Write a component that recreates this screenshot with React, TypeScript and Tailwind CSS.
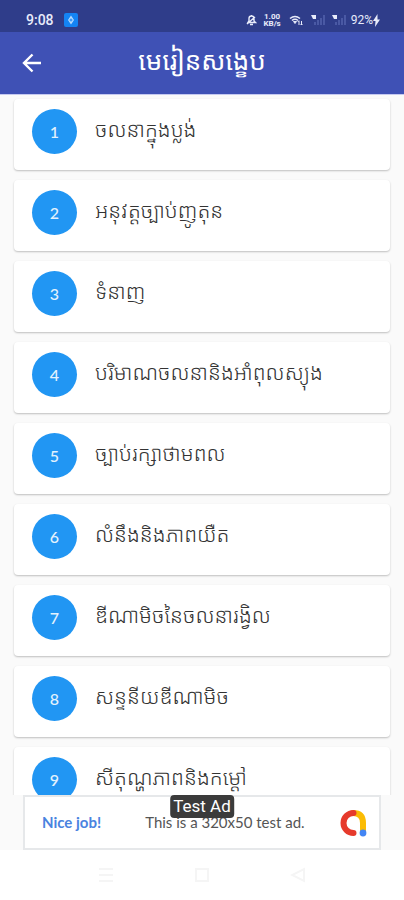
import React from 'react';

interface Lesson {
    id: number;
    title: string;
}

const lessons: Lesson[] = [
    { id: 1, title: 'ចលនាក្នុងប្លង់' },
    { id: 2, title: 'អនុវត្តច្បាប់ញូតុន' },
    { id: 3, title: 'ទំនាញ' },
    { id: 4, title: 'បរិមាណចលនានិងអាំពុលស្យុង' },
    { id: 5, title: 'ច្បាប់រក្សាថាមពល' },
    { id: 6, title: 'លំនឹងនិងភាពយឺត' },
    { id: 7, title: 'ឌីណាមិចនៃចលនារង្វិល' },
    { id: 8, title: 'សន្ទនីយឌីណាមិច' },
    { id: 9, title: 'សីតុណ្ហភាពនិងកម្តៅ' },
];

const SignalIcon: React.FC = () => (
    <svg width="15" height="12" viewBox="0 0 15 12" aria-hidden="true">
        <path d="M0 1h5v4H2z" fill="#e8ebfa" />
        <path d="M4 11V8M7 11V6M10 11V4M13 11V1" stroke="#5463ad" strokeWidth="1.500" />
    </svg>
);

const StatusBar: React.FC = () => (
    <div className="flex h-8 shrink-0 items-center justify-between bg-[#2f3d8a] pt-2 pr-6 pl-[26px] text-[#e8ebfa]">
        <div className="flex items-center gap-2.5">
            <span className="text-sm font-medium">9:08</span>
            <svg width="14" height="14" viewBox="0 0 14 14" aria-hidden="true">
                <rect width="14" height="14" rx="2" fill="#1484f5" />
                <path d="M7 2.500 10 7l-3 4.500L4 7z" fill="#b9dcff" />
                <path d="M7 5.500v3M5.500 7h3" stroke="#1484f5" />
            </svg>
        </div>
        <div className="flex items-center">
            <svg className="mr-1.5" width="11" height="12" viewBox="0 0 11 12" fill="none" stroke="currentColor" strokeWidth="1.400" aria-hidden="true">
                <path d="M2 8.500 3 7V4.500a2.500 2.500 0 0 1 5 0V7l1.500 1.500zM5.500 1v1M4 10.500h3M1 10l8-7" />
            </svg>
            <span className="mr-2 flex flex-col items-center text-[8px] leading-[7px] font-bold">
                <span>1.00</span>
                <span>KB/s</span>
            </span>
            <svg className="mr-2" width="14" height="12" viewBox="0 0 14 12" fill="none" stroke="currentColor" aria-hidden="true">
                <path d="M1 4.500q5-4 10 0M3 6.500q3-2.500 6 0" strokeWidth="1.600" />
                <path d="M4.500 7.500h3L6 9.500z" fill="currentColor" />
                <path d="M10 7v4M8.800 8 10 6.500M12.500 7v4M11.500 10l1 1 1-1" />
            </svg>
            <span className="mr-1 flex gap-1.5">
                <SignalIcon />
                <SignalIcon />
            </span>
            <span className="text-xs">92%</span>
            <svg width="7" height="13" viewBox="0 0 7 13" aria-hidden="true">
                <path d="M4.500 0 0 7h2.500L2 13l5-7.500H4.500z" fill="currentColor" />
            </svg>
        </div>
    </div>
);

const AppBar: React.FC = () => (
    <header className="grid h-[63px] shrink-0 grid-cols-[44px_1fr_44px] items-center border-b border-[#c5c9f0] bg-[#3f51b5] px-2.5 text-white">
        <button type="button" aria-label="Back" className="flex h-11 w-11 items-center justify-center">
            <svg width="20" height="20" viewBox="0 0 20 20" fill="none" stroke="currentColor" strokeWidth="2.400" aria-hidden="true">
                <path d="M19 10H3M10.500 1.500 2 10l8.500 8.500" />
            </svg>
        </button>
        <h1 className="pb-1 text-center text-[26px] leading-8">មេរៀនសង្ខេប</h1>
    </header>
);

const LessonCard: React.FC<{ lesson: Lesson }> = ({ lesson }) => (
    <li>
        <a href={`#lesson-${lesson.id}`} className="flex h-[71px] items-start rounded bg-white px-[18px] pt-2.5 shadow-[0_1px_2px_rgba(0,0,0,0.24)]">
            <span className="flex h-[45px] w-[45px] shrink-0 items-center justify-center rounded-full bg-[#2196f3] font-['Lato'] text-base font-medium text-[#e3f2fd]">
                {lesson.id}
            </span>
            <span className="ml-[18px] text-[21px] leading-[43px] font-light whitespace-nowrap text-[#333]">{lesson.title}</span>
        </a>
    </li>
);

const AdMobLogo: React.FC = () => (
    <svg className="ml-auto" width="28" height="28" viewBox="0 0 28 28" fill="none" strokeWidth="6" strokeLinecap="round" aria-hidden="true">
        <path d="M14 4q10 0 10 10v10" stroke="#fbbc04" />
        <path d="M14.500 4A10 10 0 1 0 14.500 24" stroke="#e63a2c" />
        <circle cx="24" cy="24" r="3.400" fill="#4285f4" />
    </svg>
);

const AdBanner: React.FC = () => (
    <aside className="relative mx-[23px] flex h-[55px] shrink-0 items-center border-2 border-[#e6e8ea] bg-white pr-3 pl-[17px] font-['Lato'] text-[15px]">
        <a href="#ad" className="font-bold text-[#4a83df]">Nice job!</a>
        <span className="ml-11 text-[#555]">This is a 320x50 test ad.</span>
        <AdMobLogo />
        <span className="absolute top-[-2px] left-1/2 -translate-x-1/2 rounded bg-[#3b3b3b] px-[3px] font-['Roboto'] text-[17px] leading-[23px] whitespace-nowrap text-white">
            Test Ad
        </span>
    </aside>
);

const NavBar: React.FC = () => (
    <nav className="flex h-[50px] shrink-0 items-center justify-center gap-20 bg-white text-[#f5f5f5]">
        <button type="button" aria-label="Recent apps">
            <svg width="16" height="16" viewBox="0 0 16 16" fill="none" stroke="currentColor" strokeWidth="2" aria-hidden="true">
                <path d="M1 2h14M1 8h14M1 14h14" />
            </svg>
        </button>
        <button type="button" aria-label="Home">
            <svg width="16" height="16" viewBox="0 0 16 16" fill="none" stroke="currentColor" strokeWidth="2" aria-hidden="true">
                <rect x="2" y="2" width="12" height="12" />
            </svg>
        </button>
        <button type="button" aria-label="Back">
            <svg width="16" height="16" viewBox="0 0 16 16" fill="none" stroke="currentColor" strokeWidth="2" aria-hidden="true">
                <path d="M14 2v12L2 8z" />
            </svg>
        </button>
    </nav>
);

const App: React.FC = () => {
    return (
        <div className="flex h-screen flex-col bg-[#fafafa] font-['Roboto','Noto_Sans_Khmer','Noto_Sans',sans-serif]">
            <StatusBar />
            <AppBar />
            <main className="min-h-0 flex-1 overflow-hidden px-[14px] pt-1">
                <ul className="flex flex-col gap-2.5">
                    {lessons.map((lesson) => (
                        <LessonCard key={lesson.id} lesson={lesson} />
                    ))}
                </ul>
            </main>
            <AdBanner />
            <NavBar />
        </div>
    );
};

export default App;
